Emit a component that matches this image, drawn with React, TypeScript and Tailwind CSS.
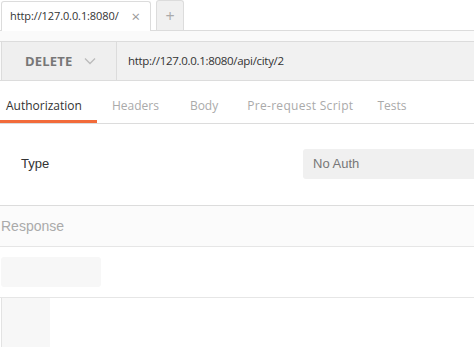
import { useState } from "react";

const tabs = [
  { name: "Authorization", cls: "pl-[6px] pr-[15px]" },
  { name: "Headers", cls: "ml-[15px] px-0" },
  { name: "Body", cls: "ml-[31px] px-0" },
  { name: "Pre-request Script", cls: "ml-[29px] px-0 tracking-[0.3px]" },
  { name: "Tests", cls: "ml-[24px] px-0" },
];

export default function App() {
  const [active, setActive] = useState("Authorization");

  return (
    <div className="w-[474px] h-[347px] overflow-hidden bg-white text-[#333]" style={{ fontFamily: '"Open Sans", sans-serif' }}>
      {/* window tabs */}
      <div className="h-[31px] flex items-end gap-[5px] pl-px border-b border-[#dcdcdc] bg-white">
        <div className="w-[150px] h-[30px] -mb-px flex items-center justify-between pl-[8px] pr-[10px] bg-white border border-b-0 border-[#dcdcdc] rounded-t-[3px] text-[11px] tracking-[-0.1px] text-[#333]">
          <span>http://127.0.0.1:8080/</span>
          <span className="text-[#999] text-[15px] leading-none">×</span>
        </div>
        <div className="w-[28px] h-[30px] flex items-center justify-center bg-[#f0f0f0] border border-b-0 border-[#dcdcdc] rounded-t-[3px] text-[#aaa] text-[16px] leading-none">
          +
        </div>
      </div>

      {/* request bar */}
      <div className="bg-[#fafafa] pt-[10px]">
        <div className="flex h-[40px] border-y border-[#dcdcdc]">
          <div className="w-[116px] ml-[1px] flex items-center pl-[23px] gap-[11px] bg-[#efefef] border-x border-[#dcdcdc]">
            <span className="text-[13px] font-bold text-[#777] tracking-[0.2px] pt-px">DELETE</span>
            <svg width="12" height="8" viewBox="0 0 12 8" fill="none" stroke="#bbb" strokeWidth="1.3">
              <path d="M1 1.5 L6 6.5 L11 1.5" />
            </svg>
          </div>
          <div className="flex-1 flex items-center pl-[11px] bg-[#f1f1f1] text-[11.5px] tracking-[-0.3px] text-[#333]">
            http://127.0.0.1:8080/api/city/2
          </div>
        </div>
      </div>

      {/* request tabs */}
      <div className="flex h-[43px] border-b border-[#dcdcdc] bg-white">
        {tabs.map((t) => (
          <button
            key={t.name}
            onClick={() => setActive(t.name)}
            className={
              t.cls +
              " text-[12px] border-b-[3px] pt-[10px] " +
              (t.name === active ? "text-[#333] border-[#f26b3a]" : "text-[#aaa] border-transparent")
            }
          >
            {t.name}
          </button>
        ))}
      </div>

      {/* auth type */}
      <div className="h-[81px] flex items-center justify-between bg-white" style={{ fontFamily: '"Liberation Sans", Arial, sans-serif' }}>
        <span className="pl-[21px] text-[13px] text-[#333] -mt-[2px]">Type</span>
        <div className="w-[171px] h-[30px] -mt-[2px] flex items-center pl-[10px] bg-[#f0f0f0] rounded-l-[3px] text-[13px] text-[#777]">
          No Auth
        </div>
      </div>

      {/* response */}
      <div className="border-t border-[#dcdcdc] bg-[#fbfbfb] h-[41px] flex items-center pl-px text-[14px] text-[#aaa]" style={{ fontFamily: '"Liberation Sans", Arial, sans-serif' }}>
        Response
      </div>
      <div className="border-t border-[#e6e6e6] bg-white h-[51px] pt-[10px] pl-px">
        <div className="w-[100px] h-[30px] bg-[#f7f7f7] rounded-[3px]" />
      </div>
      <div className="border-t border-[#e6e6e6] bg-white h-[60px] pl-px flex">
        <div className="w-[49px] h-full bg-[#f7f7f7] border-l border-[#e3e3e3]" />
      </div>
    </div>
  );
}
